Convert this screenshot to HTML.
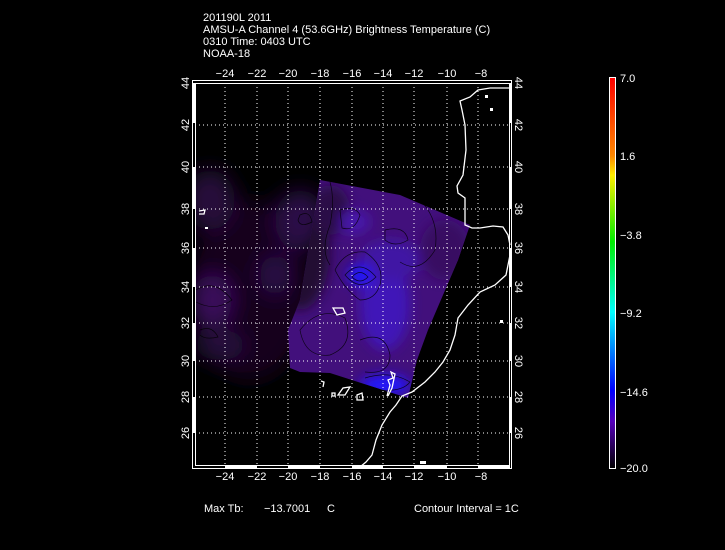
<!DOCTYPE html>
<html><head><meta charset="utf-8"><style>
html,body{margin:0;padding:0;background:#000;width:725px;height:550px;overflow:hidden}
svg{display:block}
text{font-family:"Liberation Sans",sans-serif;fill:#fff;font-size:11px}
</style></head><body>
<svg width="725" height="550" viewBox="0 0 725 550">
<defs>
<linearGradient id="cb" x1="0" y1="0" x2="0" y2="1">
<stop offset="0" stop-color="#ff0000"/>
<stop offset="0.2" stop-color="#ff8800"/>
<stop offset="0.25" stop-color="#ffee00"/>
<stop offset="0.42" stop-color="#00ee00"/>
<stop offset="0.6" stop-color="#00ffff"/>
<stop offset="0.8" stop-color="#0000ff"/>
<stop offset="0.88" stop-color="#5500bb"/>
<stop offset="1" stop-color="#000000"/>
</linearGradient>
<filter id="bl"><feGaussianBlur stdDeviation="6"/></filter>
<filter id="bl2"><feGaussianBlur stdDeviation="10"/></filter>
<clipPath id="sw"><polygon points="320,180 400,195 470,225 458,260 428,330 417,360 408,398 330,373 300,372 290,368 288,330 300,300"/></clipPath>
<clipPath id="pl"><rect x="195" y="83" width="315" height="383"/></clipPath>
</defs>
<text x="203" y="21">201190L 2011</text>
<text x="203" y="33">AMSU-A Channel 4 (53.6GHz) Brightness Temperature (C)</text>
<text x="203" y="45">0310 Time: 0403 UTC</text>
<text x="203" y="57">NOAA-18</text>

<g clip-path="url(#pl)">
<g filter="url(#bl2)">
<ellipse cx="250" cy="290" rx="60" ry="90" fill="#12031b"/>
<ellipse cx="210" cy="200" rx="25" ry="30" fill="#26093a"/>
<ellipse cx="212" cy="300" rx="20" ry="25" fill="#3a0e5c"/>
<ellipse cx="300" cy="220" rx="25" ry="30" fill="#2c0a46"/>
<ellipse cx="220" cy="345" rx="25" ry="15" fill="#280a3e"/>
<ellipse cx="275" cy="275" rx="15" ry="20" fill="#2c0a46"/>
</g>
<g clip-path="url(#sw)">
<rect x="280" y="170" width="200" height="240" fill="#42107c"/>
<g filter="url(#bl)">
<ellipse cx="300" cy="250" rx="30" ry="60" fill="#220733"/>
<ellipse cx="330" cy="210" rx="20" ry="25" fill="#2c0846"/>
<ellipse cx="445" cy="250" rx="25" ry="30" fill="#380d62"/>
<ellipse cx="385" cy="305" rx="25" ry="45" fill="#4016b8"/>
<ellipse cx="390" cy="260" rx="30" ry="20" fill="#3f14a4"/>
<ellipse cx="360" cy="275" rx="12" ry="10" fill="#1a14ff"/>
<ellipse cx="385" cy="385" rx="25" ry="10" fill="#2016ff"/>
<ellipse cx="355" cy="222" rx="15" ry="12" fill="#4616aa"/>
</g>
</g>
<g fill="none" stroke="#000" stroke-width="0.7" opacity="0.8">
<path d="M340,210 Q355,205 360,215 Q355,232 342,228 Z"/>
<path d="M352,277 Q360,268 368,277 Q360,285 352,277 Z"/>
<path d="M345,275 Q360,258 376,277 Q360,293 345,275 Z"/>
<path d="M335,270 Q345,250 365,252 Q385,265 380,285 Q375,300 360,300 Q345,290 335,270"/>
<path d="M300,330 Q320,305 345,318 Q355,345 330,355 Q305,358 300,330"/>
<path d="M360,340 Q385,330 390,355 Q390,375 365,372"/>
<path d="M365,378 Q390,370 410,382 Q400,395 365,388"/>
<path d="M385,230 Q405,225 408,240 Q395,248 385,240 Z"/>
<path d="M420,200 Q440,220 435,250 Q420,275 400,262"/>
<path d="M196,290 Q215,278 232,300 Q215,312 196,302"/>
<path d="M200,330 Q212,325 218,337 Q205,340 200,335"/>
<path d="M300,215 Q310,210 312,222 Q300,228 298,220 Z"/>
<path d="M330,182 Q335,200 330,225 Q320,250 330,265"/>
</g>
</g>

<g stroke="#fff" stroke-width="1" stroke-dasharray="1,3">
<path d="M225,83V466M257,83V466M288,83V466M320,83V466M352,83V466M383,83V466M414,83V466M447,83V466M478,83V466"/>
<path d="M195,125H510M195,167H510M195,209H510M195,248H510M195,287H510M195,323H510M195,361H510M195,397H510M195,433H510"/>
</g>

<g fill="none" stroke="#fff" stroke-width="1.3">
<path d="M510,88 L490,88 L478,90 L470,97 L460,101 L462,110 L465,125 L466,150 L463,175 L457,186 L458,193 L465,198 L465,225 L472,228 L480,228 L493,226 L503,227 L508,235 L510,245"/>
<path d="M510,255 L506,275 L495,285 L480,292 L468,305 L458,318 L455,335 L450,350 L443,362 L435,372 L425,382 L412,392 L402,396 L396,405 L390,412 L382,425 L376,440 L372,455 L366,462 L360,467"/>
<path d="M333,308 L343,308 L345,313 L337,315 Z"/>
<path d="M387,396 L390,385 L388,380 L393,378 L391,372 L395,374 L392,388 L388,396"/>
<path d="M338,395 L343,388 L350,387 L345,395 Z"/>
<path d="M357,395 L362,393 L363,400 L357,400 Z"/>
<path d="M321,381 L324,382 L323,387"/>
<path d="M332,393 L335,393 L335,396 L332,396 Z"/>
<path d="M199,211 L205,210 L204,214 L199,214"/>
</g>
<g fill="#fff"><rect x="205" y="227" width="3" height="2"/><rect x="485" y="95" width="3" height="3"/><rect x="490" y="108" width="3" height="3"/><rect x="500" y="320" width="3" height="3"/><rect x="420" y="461" width="6" height="3"/></g>

<rect x="192.5" y="80.5" width="319" height="388" fill="none" stroke="#fff"/>
<rect x="195.5" y="83.5" width="314" height="382" fill="none" stroke="#fff"/>
<g fill="#fff">
<rect x="225" y="466" width="32" height="3"/><rect x="288" y="466" width="32" height="3"/><rect x="352" y="466" width="31" height="3"/><rect x="414" y="466" width="33" height="3"/><rect x="478" y="466" width="32" height="3"/>
<rect x="193" y="83" width="3" height="40"/><rect x="193" y="167" width="3" height="42"/><rect x="193" y="248" width="3" height="39"/><rect x="193" y="323" width="3" height="38"/><rect x="193" y="397" width="3" height="36"/>
<rect x="509" y="83" width="3" height="40"/><rect x="509" y="167" width="3" height="42"/><rect x="509" y="248" width="3" height="39"/><rect x="509" y="323" width="3" height="38"/><rect x="509" y="397" width="3" height="36"/>
</g>

<g text-anchor="middle">
<text x="225" y="77">−24</text><text x="257" y="77">−22</text><text x="288" y="77">−20</text><text x="320" y="77">−18</text><text x="352" y="77">−16</text><text x="383" y="77">−14</text><text x="414" y="77">−12</text><text x="447" y="77">−10</text><text x="481" y="77">−8</text>
<text x="225" y="480">−24</text><text x="257" y="480">−22</text><text x="288" y="480">−20</text><text x="320" y="480">−18</text><text x="352" y="480">−16</text><text x="383" y="480">−14</text><text x="414" y="480">−12</text><text x="447" y="480">−10</text><text x="481" y="480">−8</text>
</g>
<g text-anchor="middle">
<text transform="translate(189,83) rotate(-90)">44</text><text transform="translate(189,125) rotate(-90)">42</text><text transform="translate(189,167) rotate(-90)">40</text><text transform="translate(189,209) rotate(-90)">38</text><text transform="translate(189,248) rotate(-90)">36</text><text transform="translate(189,287) rotate(-90)">34</text><text transform="translate(189,323) rotate(-90)">32</text><text transform="translate(189,361) rotate(-90)">30</text><text transform="translate(189,397) rotate(-90)">28</text><text transform="translate(189,433) rotate(-90)">26</text>
<text transform="translate(515,83) rotate(90)">44</text><text transform="translate(515,125) rotate(90)">42</text><text transform="translate(515,167) rotate(90)">40</text><text transform="translate(515,209) rotate(90)">38</text><text transform="translate(515,248) rotate(90)">36</text><text transform="translate(515,287) rotate(90)">34</text><text transform="translate(515,323) rotate(90)">32</text><text transform="translate(515,361) rotate(90)">30</text><text transform="translate(515,397) rotate(90)">28</text><text transform="translate(515,433) rotate(90)">26</text>
</g>

<rect x="609.5" y="77.5" width="6" height="391" fill="url(#cb)" stroke="#fff"/>
<text x="620" y="82">7.0</text>
<text x="620" y="160">1.6</text>
<text x="620" y="239">−3.8</text>
<text x="620" y="317">−9.2</text>
<text x="620" y="396">−14.6</text>
<text x="620" y="472">−20.0</text>

<text x="204" y="512">Max Tb:</text>
<text x="264" y="512">−13.7001</text>
<text x="327" y="512">C</text>
<text x="414" y="512">Contour Interval = 1C</text>
</svg>
</body></html>
